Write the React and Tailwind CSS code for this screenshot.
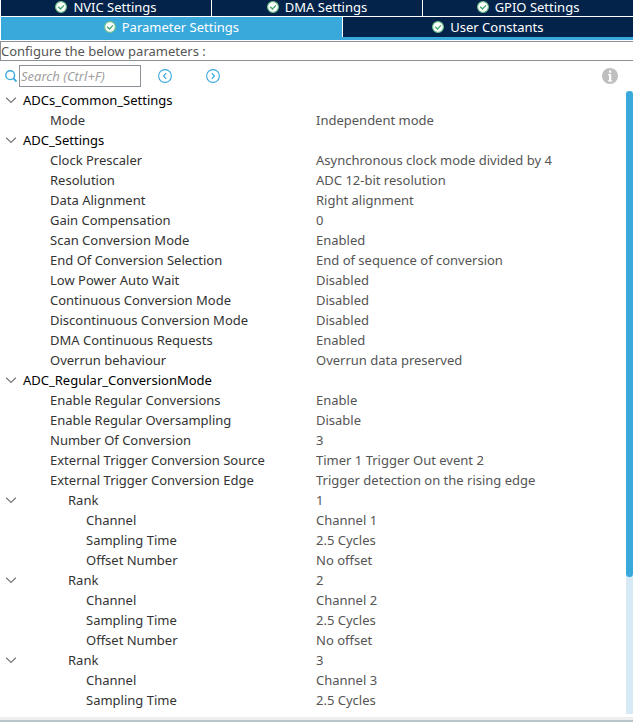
import React, { useState } from 'react';
import clsx from 'clsx';

const topTabs = ['NVIC Settings', 'DMA Settings', 'GPIO Settings'];
const bottomTabs = ['Parameter Settings', 'User Constants'];

const rank = (n, last) => ({
  name: 'Rank',
  value: String(n),
  children: [
    { name: 'Channel', value: `Channel ${n}` },
    { name: 'Sampling Time', value: '2.5 Cycles' },
    ...(last ? [] : [{ name: 'Offset Number', value: 'No offset' }]),
  ],
});

const groups = [
  {
    name: 'ADCs_Common_Settings',
    children: [{ name: 'Mode', value: 'Independent mode' }],
  },
  {
    name: 'ADC_Settings',
    children: [
      { name: 'Clock Prescaler', value: 'Asynchronous clock mode divided by 4' },
      { name: 'Resolution', value: 'ADC 12-bit resolution' },
      { name: 'Data Alignment', value: 'Right alignment' },
      { name: 'Gain Compensation', value: '0' },
      { name: 'Scan Conversion Mode', value: 'Enabled' },
      { name: 'End Of Conversion Selection', value: 'End of sequence of conversion' },
      { name: 'Low Power Auto Wait', value: 'Disabled' },
      { name: 'Continuous Conversion Mode', value: 'Disabled' },
      { name: 'Discontinuous Conversion Mode', value: 'Disabled' },
      { name: 'DMA Continuous Requests', value: 'Enabled' },
      { name: 'Overrun behaviour', value: 'Overrun data preserved' },
    ],
  },
  {
    name: 'ADC_Regular_ConversionMode',
    children: [
      { name: 'Enable Regular Conversions', value: 'Enable' },
      { name: 'Enable Regular Oversampling', value: 'Disable' },
      { name: 'Number Of Conversion', value: '3' },
      { name: 'External Trigger Conversion Source', value: 'Timer 1 Trigger Out event 2' },
      { name: 'External Trigger Conversion Edge', value: 'Trigger detection on the rising edge' },
      rank(1),
      rank(2),
      rank(3, true),
    ],
  },
];

// Walk the tree and keep only the rows whose parents are open
const flatten = (nodes, closed, level = 0, parent = '') =>
  nodes.flatMap((node, i) => {
    const id = `${parent}/${i}`;
    const row = { ...node, id, level };
    if (!node.children || closed[id]) return [row];
    return [row, ...flatten(node.children, closed, level + 1, id)];
  });

const CheckIcon = () => (
  <svg className="w-3 h-3 shrink-0" viewBox="0 0 12 12" fill="none" aria-hidden="true">
    <circle cx="6" cy="6" r="5.4" fill="#fff" stroke="#6cc08c" strokeWidth="1.2" />
    <path d="M3.2 5.7l2.3 2.3 3.4-3.6" stroke="#3fa869" strokeWidth="1.3" />
  </svg>
);

const SearchIcon = () => (
  <svg className="w-3 h-3 shrink-0" viewBox="0 0 12 12" fill="none" stroke="#39a9dc" aria-hidden="true">
    <circle cx="5.2" cy="5.2" r="4.4" strokeWidth="1.4" />
    <path d="M8.2 8.2l3.3 3.3" strokeWidth="1.8" />
  </svg>
);

const ArrowIcon = ({ d }) => (
  <svg className="w-3.5 h-3.5" viewBox="0 0 14 14" fill="none" stroke="#39a9dc" aria-hidden="true">
    <circle cx="7" cy="7" r="6.4" strokeWidth="1.1" />
    <path d={d} strokeWidth="1.2" />
  </svg>
);

const Chevron = ({ open }) => (
  <svg
    className={clsx('w-3 h-3', !open && '-rotate-90')}
    viewBox="0 0 12 12"
    fill="none"
    stroke="#777"
    strokeWidth="1.2"
    aria-hidden="true"
  >
    <path d="M1.2 3.7L6 8.4l4.8-4.7" />
  </svg>
);

const Tab = ({ label, active, onClick, className }) => (
  <button
    type="button"
    role="tab"
    aria-selected={active}
    onClick={onClick}
    className={clsx(
      'flex flex-1 items-center justify-center gap-1.5 text-white',
      active ? 'bg-[#39a9dc]' : 'bg-[#03234b]',
      className
    )}
  >
    <CheckIcon />
    {label}
  </button>
);

const indent = ['pl-[23px]', 'pl-[50px]', 'pl-[86px]'];

export default function App() {
  const [tab, setTab] = useState('Parameter Settings');
  const [query, setQuery] = useState('');
  const [closed, setClosed] = useState({});

  const toggle = (id) => setClosed((prev) => ({ ...prev, [id]: !prev[id] }));
  const rows = flatten(groups, closed).filter((row) => row.name.toLowerCase().includes(query.toLowerCase()));

  return (
    <div className="bg-white font-['Noto_Sans',sans-serif] text-[13px] leading-5 text-[#555]">
      {/* Tabs */}
      <div role="tablist">
        <div className="flex h-4 gap-px pl-px">
          {topTabs.map((label) => (
            <Tab
              key={label}
              label={label}
              active={tab === label}
              onClick={() => setTab(label)}
              className="pb-0.5 leading-[14px]"
            />
          ))}
        </div>
        <div className="mt-px flex h-5 gap-px pl-px">
          {bottomTabs.map((label, i) => (
            <Tab
              key={label}
              label={label}
              active={tab === label}
              onClick={() => setTab(label)}
              className={i === 0 ? 'grow-[27]' : 'grow-[23]'}
            />
          ))}
        </div>
        <div className="ml-px h-[3px] bg-[#39a9dc]" />
      </div>

      <p className="mt-px h-5 border border-r-0 border-[#8b9196] leading-[18px]">Configure the below parameters :</p>

      {/* Search */}
      <div className="flex items-center pt-1 pr-[15px] pb-[3px] pl-[5px]">
        <label htmlFor="search" aria-label="Search">
          <SearchIcon />
        </label>
        <input
          id="search"
          type="text"
          value={query}
          onChange={(e) => setQuery(e.target.value)}
          placeholder="Search (Ctrl+F)"
          className="ml-0.5 h-[22px] w-[122px] border border-[#8b9196] px-px italic outline-none placeholder:text-[#a0a0a0]"
        />
        <button type="button" aria-label="Previous match" className="ml-[17px]">
          <ArrowIcon d="M8.2 4.2L5.6 7l2.6 2.8" />
        </button>
        <button type="button" aria-label="Next match" className="ml-[34px]">
          <ArrowIcon d="M5.8 4.2L8.4 7 5.8 9.8" />
        </button>
        <button type="button" aria-label="Information" className="ml-auto">
          <svg className="w-4 h-4" viewBox="0 0 16 16" aria-hidden="true">
            <circle cx="8" cy="8" r="8" fill="#bfbfbf" />
            <path d="M7 2.6h2.2v2.2H7zM6 6h3.2v6.2h1v1.2H6v-1.2h1V7.2H6z" fill="#fff" />
          </svg>
        </button>
      </div>

      {/* Parameters */}
      <div className="flex">
        <table className="flex-1 table-fixed border-collapse text-left">
          <colgroup>
            <col className="w-1/2" />
            <col className="w-1/2" />
          </colgroup>
          <tbody>
            {rows.map((row) => (
              <tr key={row.id} className="h-5">
                <th
                  scope="row"
                  className={clsx(
                    'relative p-0 font-normal whitespace-nowrap',
                    row.level === 0 ? 'text-black' : 'text-[#333]',
                    row.children && row.level === 1 ? 'pl-[68px]' : indent[row.level]
                  )}
                >
                  {row.children && (
                    <button
                      type="button"
                      aria-label={`Toggle ${row.name}`}
                      aria-expanded={!closed[row.id]}
                      onClick={() => toggle(row.id)}
                      className="absolute left-[5px] top-1"
                    >
                      <Chevron open={!closed[row.id]} />
                    </button>
                  )}
                  {row.name}
                </th>
                <td className="p-0 pl-[3px] whitespace-nowrap">{row.value}</td>
              </tr>
            ))}
          </tbody>
        </table>
        <div className="mt-px -mb-1 w-[7px] bg-[#d8e9f6]">
          <div className="h-[78%] rounded bg-[#39a9dc]" />
        </div>
      </div>

      <div className="mt-[7px] h-[5px] border-b-2 border-[#b7c5ca] bg-[#eeefef]" />
    </div>
  );
}
